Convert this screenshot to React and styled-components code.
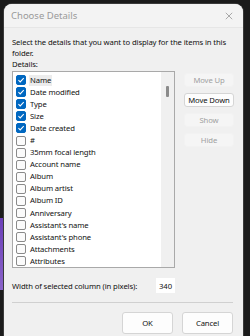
import React from "react";
import styled, { createGlobalStyle } from "styled-components";

const Global = createGlobalStyle`
  html, body {
    margin: 0;
    padding: 0;
    background: #1b1b1b;
    overflow: hidden;
  }
  body {
    font-family: "Noto Sans", "Open Sans", sans-serif;
  }
`;

const Desktop = styled.div`
  display: flex;
  width: 250px;
  height: 336px;
  overflow: hidden;
`;

const Edge = styled.div`
  width: 4px;
  display: flex;
  flex-direction: column;
`;

const EdgeStripe = styled.div`
  margin-top: 218px;
  height: 72px;
  background: linear-gradient(180deg, #6b3fb8, #8a63c9);
`;

const Window = styled.div`
  margin-top: 4px;
  width: 239px;
  height: 340px;
  background: #f0f0f0;
  border-radius: 8px 8px 0 0;
  box-shadow: 0 0 0 1px #3a3a3a;
  display: flex;
  flex-direction: column;
  flex-shrink: 0;
`;

const TitleBar = styled.div`
  height: 23px;
  display: flex;
  align-items: center;
  justify-content: space-between;
  padding: 0 8px 0 7px;
  background: #f3f3f3;
  border-radius: 8px 8px 0 0;
  border-bottom: 1px solid #e6e6e6;
`;

const Title = styled.span`
  font-size: 9.5px;
  color: #9a9a9a;
`;

const Close = styled.svg`
  width: 8px;
  height: 8px;
  margin-right: 2px;
`;

const Body = styled.div`
  padding: 9px 8px 0 8px;
  font-size: 7.7px;
  letter-spacing: -0.12px;
  color: #111;
  display: flex;
  flex-direction: column;
`;

const Intro = styled.p`
  margin: 0;
  line-height: 11px;
`;

const Label = styled.div`
  margin-top: 0;
  line-height: 11px;
`;

const Main = styled.div`
  display: flex;
  gap: 9px;
  margin-top: 1px;
`;

const ListBox = styled.div`
  width: 163px;
  height: 197px;
  background: #fff;
  border: 1px solid #a9a9a9;
  display: flex;
  box-sizing: border-box;
`;

const Rows = styled.div`
  flex: 1;
  padding: 2px 0 0 3px;
  overflow: hidden;
`;

const Row = styled.div`
  display: flex;
  align-items: center;
  height: 12.1px;
  gap: 3px;
  white-space: nowrap;
`;

const Box = styled.span`
  width: 10px;
  height: 10px;
  border-radius: 2px;
  box-sizing: border-box;
  border: 1px solid ${(p) => (p.checked ? "#0067c0" : "#8a8a8a")};
  background: ${(p) => (p.checked ? "#0067c0" : "#fbfbfb")};
  display: flex;
  align-items: center;
  justify-content: center;
  flex-shrink: 0;
`;

const Name = styled.span`
  padding: 0 1px;
  line-height: 11px;
  background: ${(p) => (p.focused ? "#ececec" : "transparent")};
`;

const ScrollTrack = styled.div`
  width: 13px;
  background: #f0f0f0;
  display: flex;
  justify-content: center;
`;

const Thumb = styled.div`
  width: 3px;
  height: 11px;
  margin-top: 14px;
  border-radius: 1px;
  background: #8b8b8b;
`;

const Side = styled.div`
  display: flex;
  flex-direction: column;
  gap: 6px;
  margin-top: 2px;
`;

const SideButton = styled.div`
  width: 50px;
  height: 14px;
  box-sizing: border-box;
  border-radius: 3px;
  display: flex;
  align-items: center;
  justify-content: center;
  color: ${(p) => (p.disabled ? "#a0a0a0" : "#111")};
  background: ${(p) => (p.disabled ? "#f5f5f5" : "#fdfdfd")};
  border: 1px solid ${(p) => (p.disabled ? "#f2f2f2" : "#d5d5d5")};
`;

const WidthRow = styled.div`
  display: flex;
  align-items: center;
  justify-content: space-between;
  width: 163px;
  margin-top: 10px;
  white-space: nowrap;
`;

const WidthInput = styled.div`
  width: 19px;
  height: 15px;
  background: #fff;
  display: flex;
  align-items: center;
  justify-content: center;
`;

const Rule = styled.div`
  height: 1px;
  background: #d0d0d0;
  margin: 9px 2px 0 0;
`;

const Footer = styled.div`
  display: flex;
  justify-content: flex-end;
  gap: 9px;
  margin-top: 9px;
  padding-right: 2px;
`;

const DialogButton = styled.div`
  width: 51px;
  height: 22px;
  box-sizing: border-box;
  border: 1px solid #d5d5d5;
  border-radius: 3px;
  background: #fdfdfd;
  display: flex;
  align-items: center;
  justify-content: center;
`;

const items = [
  { name: "Name", checked: true, focused: true },
  { name: "Date modified", checked: true },
  { name: "Type", checked: true },
  { name: "Size", checked: true },
  { name: "Date created", checked: true },
  { name: "#" },
  { name: "35mm focal length" },
  { name: "Account name" },
  { name: "Album" },
  { name: "Album artist" },
  { name: "Album ID" },
  { name: "Anniversary" },
  { name: "Assistant's name" },
  { name: "Assistant's phone" },
  { name: "Attachments" },
  { name: "Attributes" },
];

const Check = () => (
  <svg width="8" height="8" viewBox="0 0 10 10">
    <path d="M1.8 5.2 L4 7.4 L8.4 2.6" fill="none" stroke="#fff" strokeWidth="1.3" />
  </svg>
);

export default function App() {
  return (
    <>
      <Global />
      <Desktop>
        <Edge>
          <EdgeStripe />
        </Edge>
        <Window>
          <TitleBar>
            <Title>Choose Details</Title>
            <Close viewBox="0 0 10 10">
              <path d="M1 1 L9 9 M9 1 L1 9" stroke="#8a8a8a" strokeWidth="0.9" />
            </Close>
          </TitleBar>
          <Body>
            <Intro>Select the details that you want to display for the items in this folder.</Intro>
            <Label>Details:</Label>
            <Main>
              <ListBox>
                <Rows>
                  {items.map((item) => (
                    <Row key={item.name}>
                      <Box checked={item.checked}>{item.checked && <Check />}</Box>
                      <Name focused={item.focused}>{item.name}</Name>
                    </Row>
                  ))}
                </Rows>
                <ScrollTrack>
                  <Thumb />
                </ScrollTrack>
              </ListBox>
              <Side>
                <SideButton disabled>Move Up</SideButton>
                <SideButton>Move Down</SideButton>
                <SideButton disabled>Show</SideButton>
                <SideButton disabled>Hide</SideButton>
              </Side>
            </Main>
            <WidthRow>
              <span>Width of selected column (in pixels):</span>
              <WidthInput>340</WidthInput>
            </WidthRow>
            <Rule />
            <Footer>
              <DialogButton>OK</DialogButton>
              <DialogButton>Cancel</DialogButton>
            </Footer>
          </Body>
        </Window>
      </Desktop>
    </>
  );
}
